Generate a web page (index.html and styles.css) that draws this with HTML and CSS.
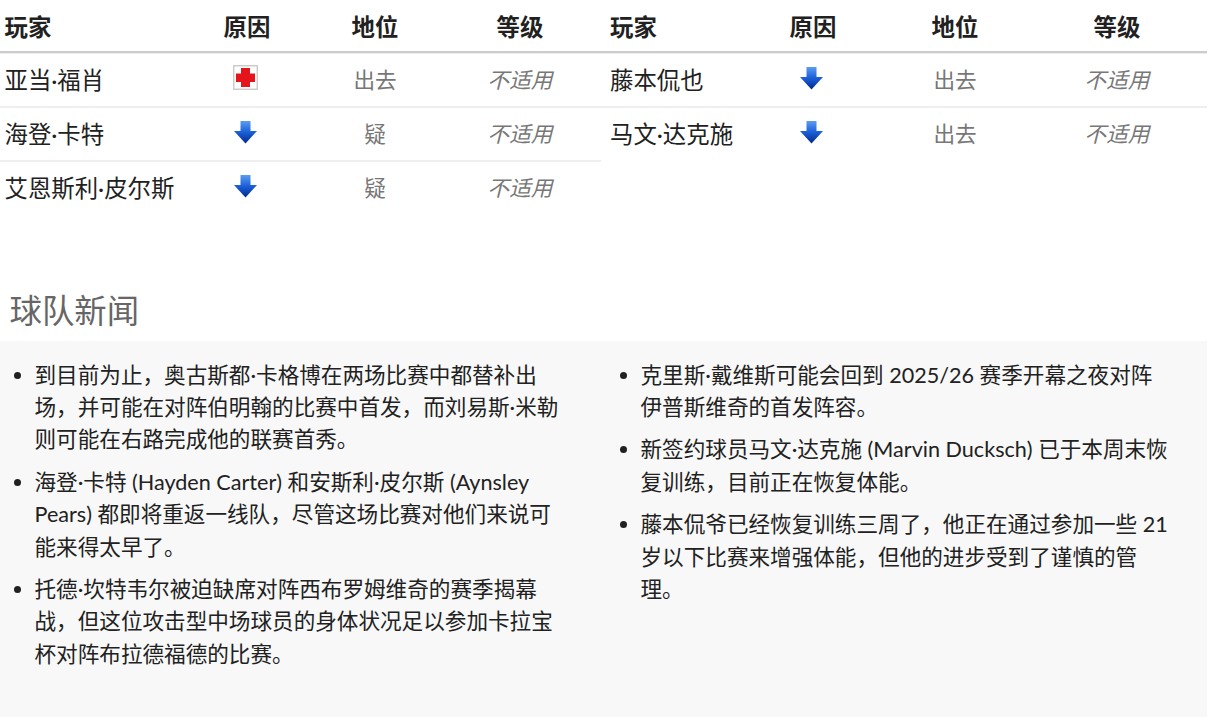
FILE: index.html
```html
<!DOCTYPE html>
<html lang="zh">
<head>
<meta charset="utf-8">
<title>球队新闻</title>
<link rel="stylesheet" href="styles.css">
</head>
<body>
<svg class="defs" width="0" height="0" aria-hidden="true">
  <defs>
    <linearGradient id="arrowFill" x1="0" y1="0" x2="0" y2="1">
      <stop offset="0" stop-color="#5c9cf0"/>
      <stop offset="0.5" stop-color="#1a5fd8"/>
      <stop offset="1" stop-color="#02288c"/>
    </linearGradient>
    <symbol id="arrow" viewBox="0 0 25 25">
      <path d="M7.500 2h10v10h6.500L12.500 24.500 1 12h6.500z" fill="url(#arrowFill)"/>
    </symbol>
  </defs>
</svg>
<div class="tables">
  <table class="squad squad-left">
    <thead><tr><th class="name">玩家</th><th>原因</th><th>地位</th><th>等级</th></tr></thead>
    <tbody>
      <tr><td class="name">亚当·福肖</td>
        <td class="reason"><svg class="icon" viewBox="0 0 25 25"><rect x="0.75" y="0.75" width="23.5" height="23.5" fill="#fff" stroke="#ccc" stroke-width="1.5"/><path d="M8 3h9v5.500h5v8.500h-5v5H8v-5H3V8.500h5z" fill="#e5141a"/></svg></td>
        <td class="status">出去</td><td class="grade">不适用</td></tr>
      <tr><td class="name">海登·卡特</td>
        <td class="reason"><svg class="icon"><use href="#arrow"/></svg></td>
        <td class="status">疑</td><td class="grade">不适用</td></tr>
      <tr><td class="name">艾恩斯利·皮尔斯</td>
        <td class="reason"><svg class="icon"><use href="#arrow"/></svg></td>
        <td class="status">疑</td><td class="grade">不适用</td></tr>
    </tbody>
  </table>
  <table class="squad squad-right">
    <thead><tr><th class="name">玩家</th><th>原因</th><th>地位</th><th>等级</th></tr></thead>
    <tbody>
      <tr><td class="name">藤本侃也</td>
        <td class="reason"><svg class="icon"><use href="#arrow"/></svg></td>
        <td class="status">出去</td><td class="grade">不适用</td></tr>
      <tr><td class="name">马文·达克施</td>
        <td class="reason"><svg class="icon"><use href="#arrow"/></svg></td>
        <td class="status">出去</td><td class="grade">不适用</td></tr>
    </tbody>
  </table>
</div>
<h2 class="news-title">球队新闻</h2>
<section class="news">
  <ul class="news-list">
    <li>到目前为止，奥古斯都·卡格博在两场比赛中都替补出场，并可能在对阵伯明翰的比赛中首发，而刘易斯·米勒则可能在右路完成他的联赛首秀。</li>
    <li>海登·卡特 (Hayden Carter) 和安斯利·皮尔斯 (Aynsley Pears) 都即将重返一线队，尽管这场比赛对他们来说可能来得太早了。</li>
    <li>托德·坎特韦尔被迫缺席对阵西布罗姆维奇的赛季揭幕战，但这位攻击型中场球员的身体状况足以参加卡拉宝杯对阵布拉德福德的比赛。</li>
  </ul>
  <ul class="news-list">
    <li>克里斯·戴维斯可能会回到 2025/26 赛季开幕之夜对阵伊普斯维奇的首发阵容。</li>
    <li>新签约球员马文·达克施 (Marvin Ducksch) 已于本周末恢复训练，目前正在恢复体能。</li>
    <li>藤本侃爷已经恢复训练三周了，他正在通过参加一些 21 岁以下比赛来增强体能，但他的进步受到了谨慎的管理。</li>
  </ul>
</section>
</body>
</html>
```
FILE: styles.css
```css
* { box-sizing: border-box; }
html, body { margin: 0; padding: 0; }
body {
  width: 1207px;
  height: 717px;
  overflow: hidden;
  background: #fff;
  color: #212121;
  font-family: Lato, "Noto Sans CJK SC", sans-serif;
  font-size: 21.6px;
}
.defs { position: absolute; }
.tables {
  display: grid;
  grid-template-columns: 601px 606px;
  align-items: start;
  height: 288px;
}
.squad {
  width: 100%;
  table-layout: fixed;
  border-collapse: collapse;
}
.squad-left th:nth-child(1) { width: 183px; }
.squad-left th:nth-child(2) { width: 128px; }
.squad-left th:nth-child(3) { width: 128px; }
.squad-left th:nth-child(4) { width: 162px; }
.squad-right th:nth-child(1) { width: 142px; }
.squad-right th:nth-child(2) { width: 140px; }
.squad-right th:nth-child(3) { width: 144px; }
.squad-right th:nth-child(4) { width: 180px; }
.squad th {
  height: 52px;
  padding: 1px 5px 0;
  font-size: 23.4px;
  font-weight: 700;
  text-align: center;
  border-bottom: 2px solid #ccc;
}
.squad td {
  height: 54px;
  padding: 0 5px 3px;
  text-align: center;
  border-bottom: 2px solid #eee;
}
.squad tbody tr:first-child td {
  height: 55px;
  padding-bottom: 2px;
  box-shadow: inset 0 1px #eee;
}
.squad tr:last-child td { border-bottom-color: transparent; }
.squad .name { text-align: left; font-size: 23.4px; }
.squad-left th.name, .squad-left td.name { padding-left: 4.5px; }
.squad-right th.name, .squad-right td.name { padding-left: 9px; }
.squad .reason { padding: 0 8px 6px 5px; }
.squad tbody tr:first-child .reason { padding-bottom: 5px; }
.status { color: #777; }
.grade { color: #777; font-style: italic; }
.icon { display: block; width: 25px; height: 25px; margin: 0 auto; }
.news-title {
  margin: 0;
  padding-left: 9.5px;
  height: 53px;
  line-height: 46px;
  font-size: 32.4px;
  font-weight: 400;
  color: #666;
}
.news {
  display: grid;
  grid-template-columns: 606px 601px;
  background: #f8f8f8;
  height: 376px;
  padding-top: 17.6px;
}
.news-list {
  margin: 0;
  padding: 0 36px 0 34.5px;
  list-style: disc;
}
.news-list li {
  line-height: 32.4px;
  margin-bottom: 10px;
}
```
